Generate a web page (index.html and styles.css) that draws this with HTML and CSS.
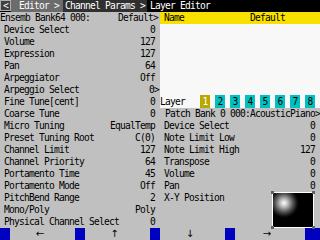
FILE: index.html
```html
<!DOCTYPE html>
<html lang="en">
<head>
    <meta charset="UTF-8">
    <title>Layer Editor</title>
    <link rel="stylesheet" href="styles.css">
</head>
<body>
    <div class="screen">
        <div class="crumbs">
            <span class="back">&lt;</span>
            <span class="crumb c1">Editor &gt;</span>
            <span class="crumb c2">Channel Params &gt;</span>
            <span class="crumb c3">Layer Editor</span>
        </div>

        <div class="main">
            <!-- Channel params -->
            <div class="panel left">
                <div class="row head"><span>Ensemb Bank64 000:</span><span>Default&gt;</span></div>
                <div class="row"><span>Device Select</span><span>0</span></div>
                <div class="row"><span>Volume</span><span>127</span></div>
                <div class="row"><span>Expression</span><span>127</span></div>
                <div class="row"><span>Pan</span><span>64</span></div>
                <div class="row"><span>Arpeggiator</span><span>Off</span></div>
                <div class="row more"><span>Arpeggio Select</span><span>0&gt;</span></div>
                <div class="row"><span>Fine Tune[cent]</span><span>0</span></div>
                <div class="row"><span>Coarse Tune</span><span>0</span></div>
                <div class="row"><span>Micro Tuning</span><span>EqualTemp</span></div>
                <div class="row"><span>Preset Tuning Root</span><span>C(0)</span></div>
                <div class="row"><span>Channel Limit</span><span>127</span></div>
                <div class="row"><span>Channel Priority</span><span>64</span></div>
                <div class="row"><span>Portamento Time</span><span>45</span></div>
                <div class="row"><span>Portamento Mode</span><span>Off</span></div>
                <div class="row"><span>PitchBend Range</span><span>2</span></div>
                <div class="row"><span>Mono/Poly</span><span>Poly</span></div>
                <div class="row"><span>Physical Channel Select</span><span>0</span></div>
            </div>

            <!-- Layer params -->
            <div class="panel right">
                <div class="name-bar"><span>Name</span><span class="name-val">Default</span></div>
                <div class="name-list"></div>
                <div class="layers">
                    <span class="layers-label">Layer</span>
                    <span class="layer active">1</span>
                    <span class="layer">2</span>
                    <span class="layer">3</span>
                    <span class="layer">4</span>
                    <span class="layer">5</span>
                    <span class="layer">6</span>
                    <span class="layer">7</span>
                    <span class="layer">8</span>
                </div>
                <div class="row bank"><span>Patch Bank 0 000:AcousticPiano&gt;</span></div>
                <div class="row"><span>Device Select</span><span>0</span></div>
                <div class="row"><span>Note Limit Low</span><span>0</span></div>
                <div class="row"><span>Note Limit High</span><span>127</span></div>
                <div class="row"><span>Transpose</span><span>0</span></div>
                <div class="row"><span>Volume</span><span>0</span></div>
                <div class="row"><span>Pan</span><span>0</span></div>
                <div class="xy-row">
                    <span>X-Y Position</span>
                    <div class="xy-pad">
                        <i class="handle tl"></i><i class="handle tr"></i>
                        <i class="handle bl"></i><i class="handle br"></i>
                    </div>
                </div>
            </div>
        </div>

        <div class="softkeys">
            <span class="key"></span><span class="label l1">&larr;</span>
            <span class="key"></span><span class="label l2">&uarr;</span>
            <span class="key"></span><span class="label l3">&darr;</span>
            <span class="key"></span><span class="label l4">&rarr;</span>
            <span class="key last"></span>
        </div>
    </div>
</body>
</html>
```

FILE: styles.css
```css
* {
    margin: 0;
    padding: 0;
    box-sizing: border-box;
}

body {
    font-family: 'DejaVu Sans Mono', monospace;
    font-size: 9.6px;
    letter-spacing: -0.78px;
    color: #000;
    background: #c0c0c0;
}

.screen {
    width: 320px;
    height: 240px;
    overflow: hidden;
    display: flex;
    flex-direction: column;
    background: #c0c0c0;
}

/* Breadcrumb header */
.crumbs {
    height: 12px;
    display: flex;
    background: #000;
    color: #fff;
    line-height: 12px;
    white-space: nowrap;
}

.back {
    width: 11px;
    height: 11px;
    line-height: 9px;
    text-align: center;
    background: #404040;
    border: 1px solid #b0b0b0;
}

.crumb {
    padding-left: 8px;
}

.c1 {
    width: 52px;
    background: #6c6c6c;
}

.c2 {
    padding-left: 2px;
    width: 84px;
    background: #303030;
}

.c3 {
    padding-left: 3px;
    background: #000;
}

/* Main split */
.main {
    height: 216px;
    display: grid;
    grid-template-columns: 160px 160px;
}

.panel {
    display: flex;
    flex-direction: column;
}

.row {
    height: 12px;
    line-height: 12px;
    display: flex;
    justify-content: space-between;
    padding: 0 5px 0 4px;
    white-space: nowrap;
}

.left .row.head {
    padding: 0 2px 0 0;
}

.left .row.more {
    padding-right: 1px;
}

.right .row {
    padding: 0 5px 0 4px;
}

.right .row.bank {
    padding: 0 0 0 5px;
}

.name-bar {
    height: 12px;
    line-height: 12px;
    display: flex;
    background: #f8e000;
    padding-left: 4px;
}

.name-val {
    margin-left: 66px;
}

.name-list {
    height: 71px;
    background: #f8f8f8;
}

.layers {
    height: 13px;
    line-height: 13px;
    display: flex;
    gap: 5px;
    background: #f8f8f8;
}

.layers-label {
    width: 35px;
}

.layer {
    width: 10px;
    text-align: center;
    background: #00c0c0;
}

.layer.active {
    background: #b8a800;
    color: #fff;
}

/* X-Y pad */
.xy-row {
    height: 36px;
    display: flex;
    justify-content: space-between;
    padding: 0 6px 0 4px;
    line-height: 12px;
}

.xy-pad {
    position: relative;
    width: 42px;
    height: 36px;
    border: 1px solid #fff;
    background: radial-gradient(circle at 11px 10px, #fff 0, #bbb 4px, #555 9px, #111 13px, #000 15px);
}

.handle {
    position: absolute;
    width: 3px;
    height: 3px;
    background: #606060;
}

.tl { left: -2px; top: -2px; }
.tr { right: -2px; top: -2px; }
.bl { left: -2px; bottom: -2px; }
.br { right: -2px; bottom: -2px; }

/* Soft keys */
.softkeys {
    height: 12px;
    display: flex;
    line-height: 12px;
}

.key {
    width: 10px;
    background: #0000c0;
}

.key.last {
    width: 15px;
}

.label {
    width: 65px;
    text-align: center;
    font-family: 'DejaVu Sans', sans-serif;
    font-size: 10px;
    letter-spacing: 0;
}

.l1 { padding-right: 5px; }
.l2 { padding-right: 6px; }
.l3 { padding-right: 5px; }
.l4 { width: 70px; padding-right: 6px; }
```
